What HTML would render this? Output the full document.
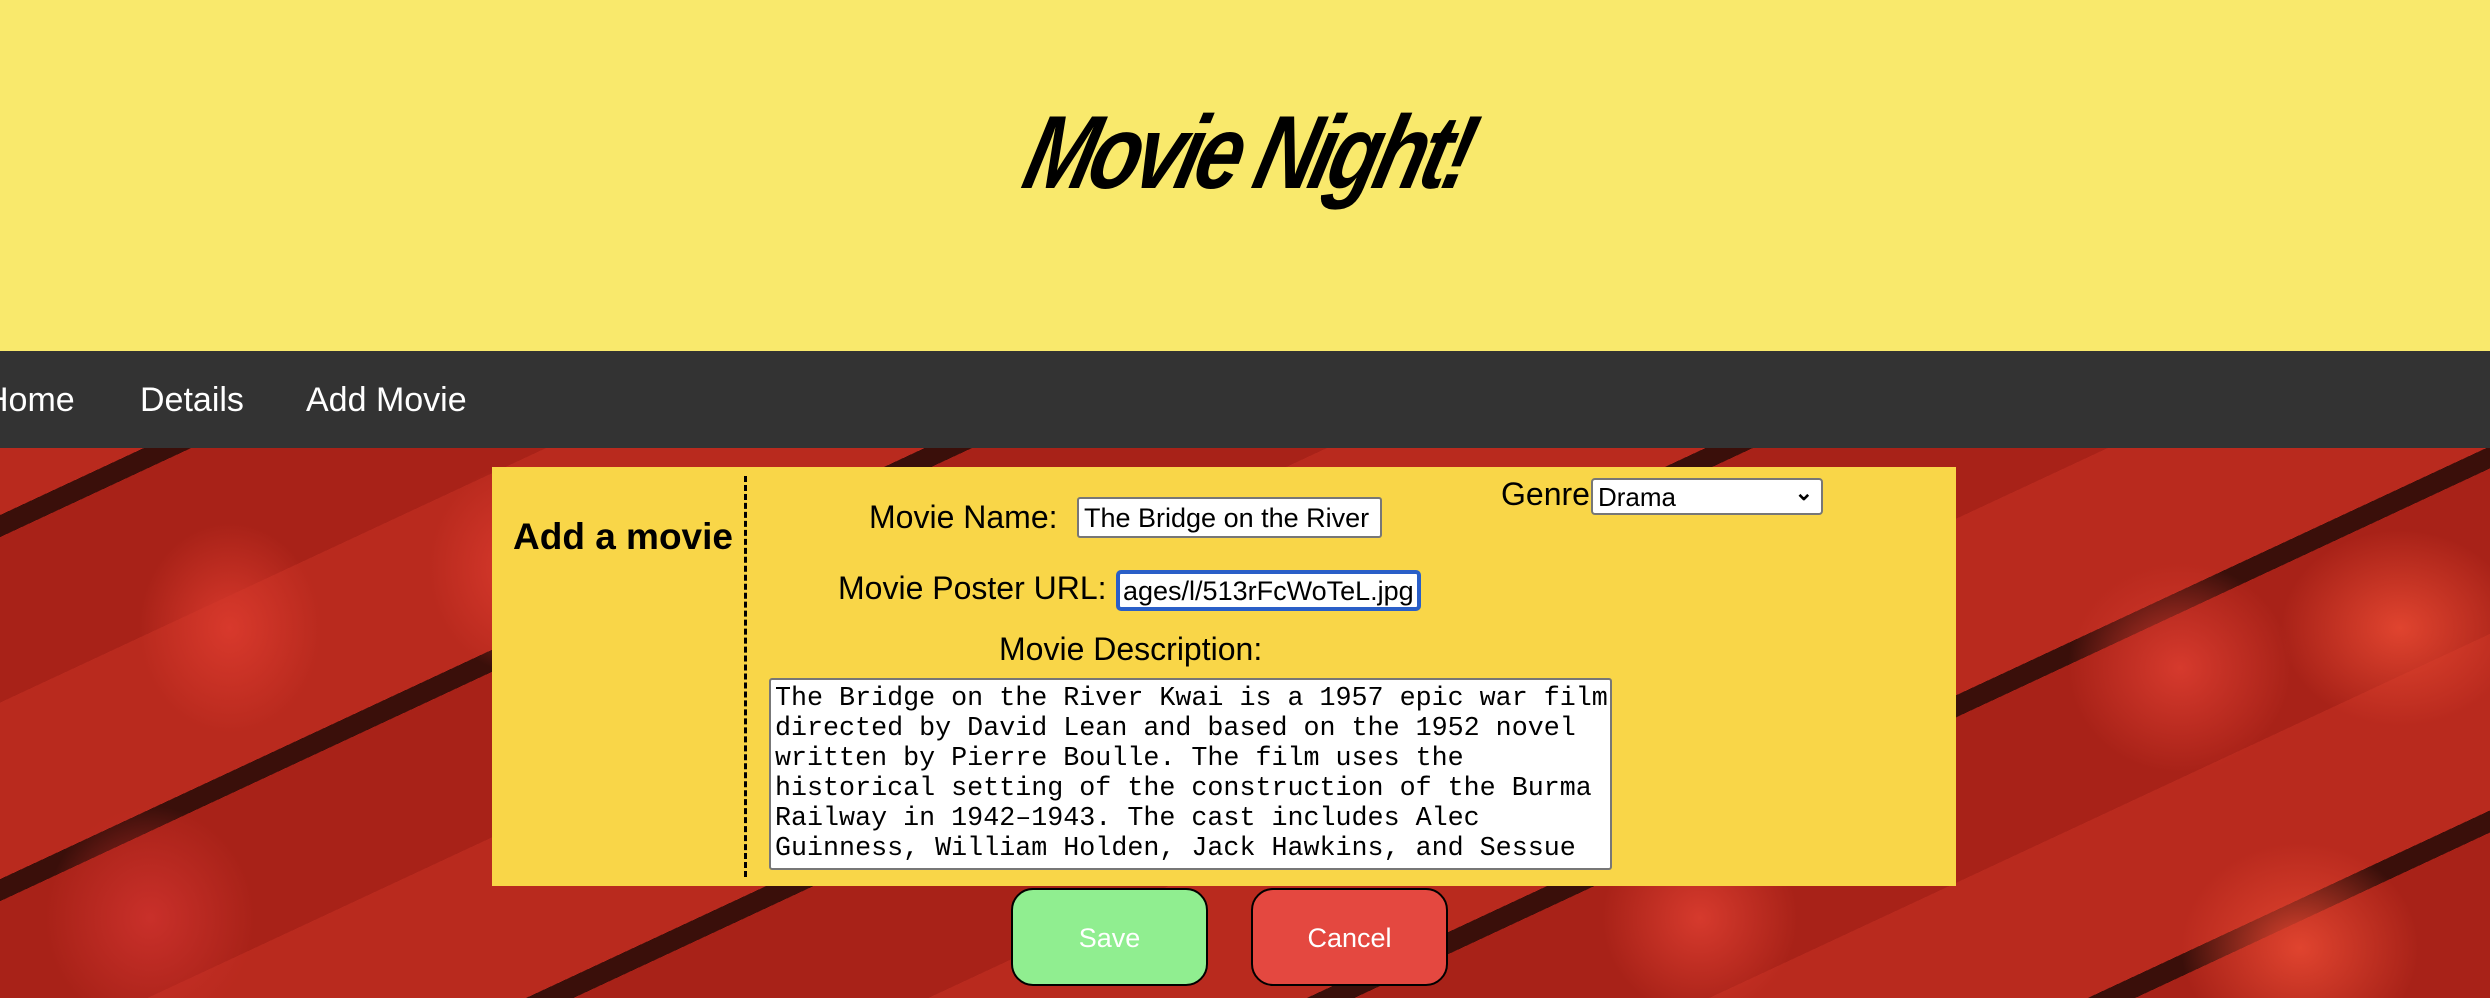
<!DOCTYPE html>
<html><head><meta charset="utf-8"><style>
*{margin:0;padding:0;box-sizing:border-box}
body{width:2490px;height:998px;overflow:hidden;font-family:"Liberation Sans",sans-serif;position:relative;background:#000}
.hdr{position:absolute;left:0;top:0;width:2490px;height:351px;background:#f9e96c}
.title{position:absolute;left:980px;top:94px;width:480px;text-align:center;font-size:104px;font-weight:bold;font-style:italic;letter-spacing:-6px;transform:skewX(-14deg) scaleX(0.8);transform-origin:center;white-space:nowrap;color:#000}
.nav{position:absolute;left:0;top:351px;width:2490px;height:97px;background:#333}
.nav span{position:absolute;top:30px;color:#fff;font-size:34px}
.bg{position:absolute;left:0;top:448px;width:2490px;height:550px;overflow:hidden;
background:
radial-gradient(ellipse 130px 150px at 230px 180px,#d8392c,transparent 70%),
radial-gradient(ellipse 130px 150px at 520px 120px,#d8392c,transparent 70%),
radial-gradient(ellipse 150px 160px at 150px 470px,#c9302a,transparent 70%),
radial-gradient(ellipse 160px 150px at 2180px 220px,#d63a2d,transparent 70%),
radial-gradient(ellipse 170px 140px at 2400px 180px,#e0442f,transparent 70%),
radial-gradient(ellipse 170px 150px at 2300px 500px,#e0442f,transparent 70%),
radial-gradient(ellipse 140px 140px at 1700px 470px,#d63a2d,transparent 70%),
repeating-linear-gradient(-25deg,#a82218 0 150px,#3a0f0a 150px 170px,#b92a1e 170px 330px),
#a8261c}
.panel{position:absolute;left:492px;top:467px;width:1464px;height:419px;background:#f9d648}
.dash{position:absolute;left:744px;top:476px;height:401px;border-left:3px dashed #000}
.t{position:absolute;font-size:32px;color:#000;white-space:nowrap}
.inp{position:absolute;background:#fff;border:2px solid #777;border-radius:3px;font-size:27px;padding:4px 5px;white-space:nowrap;overflow:hidden}
.ta{position:absolute;left:769px;top:678px;width:843px;height:192px;background:#fff;border:2px solid #777;border-radius:3px;font-family:"Liberation Mono",monospace;font-size:26.7px;line-height:30px;padding:4px 4px;white-space:pre;overflow:hidden}
.btn{position:absolute;top:888px;width:197px;height:98px;border:2px solid #000;border-radius:22px;color:#fff;font-size:27px;text-align:center;line-height:96px}
</style></head><body>
<div class="hdr"><div class="title">Movie Night!</div></div>
<div class="nav"><span style="left:-16px">Home</span><span style="left:140px">Details</span><span style="left:306px">Add Movie</span></div>
<div class="bg"></div>
<div class="panel"></div>
<div class="dash"></div>
<div class="t" style="left:513px;top:516px;font-size:37px;font-weight:bold">Add a movie</div>
<div class="t" style="left:869px;top:499px">Movie Name:</div>
<div class="inp" style="left:1077px;top:497px;width:305px;height:41px">The Bridge on the River</div>
<div class="t" style="left:1501px;top:476px">Genre</div>
<div class="inp" style="left:1591px;top:478px;width:232px;height:37px;padding:2px 5px;font-size:26px;border-radius:4px">Drama<span style="position:absolute;right:8px;top:0;font-weight:bold;font-size:22px">&#8964;</span></div>
<div class="t" style="left:838px;top:570px">Movie Poster URL:</div>
<div class="inp" style="left:1116px;top:570px;width:305px;height:41px;border:4px solid #2a5fc8;border-radius:5px;padding:2px 3px">ages/l/513rFcWoTeL.jpg</div>
<div class="t" style="left:999px;top:631px">Movie Description:</div>
<div class="ta">The Bridge on the River Kwai is a 1957 epic war film
directed by David Lean and based on the 1952 novel
written by Pierre Boulle. The film uses the
historical setting of the construction of the Burma
Railway in 1942–1943. The cast includes Alec
Guinness, William Holden, Jack Hawkins, and Sessue</div>
<div class="btn" style="left:1011px;background:#90ee90">Save</div>
<div class="btn" style="left:1251px;background:#e44840">Cancel</div>
</body></html>
